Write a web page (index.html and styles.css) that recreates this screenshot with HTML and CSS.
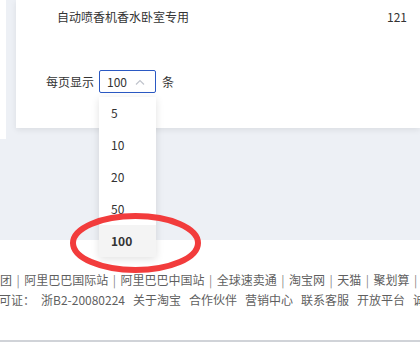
FILE: index.html
```html
<!DOCTYPE html>
<html lang="zh-CN">
<head>
<meta charset="utf-8">
<link rel="stylesheet" href="styles.css">
</head>
<body>
<div class="main">
  <div class="side"></div>
  <div class="card">
    <div class="row">
      <span class="name">自动喷香机香水卧室专用</span>
      <span class="num">121</span>
    </div>
    <div class="pager">
      <span class="label">每页显示</span>
      <div class="select">
        <span class="value">100</span>
        <svg class="chev" width="10" height="6" viewBox="0 0 10 6"><polyline points="1,5.5 5,1.5 9,5.5" fill="none" stroke="#c0c4cc" stroke-width="1.2"/></svg>
        <ul class="dropdown">
          <li>5</li>
          <li>10</li>
          <li>20</li>
          <li>50</li>
          <li class="active">100</li>
        </ul>
      </div>
      <span class="label unit">条</span>
    </div>
  </div>
</div>
<footer class="footer">
  <div class="line line1">
    <span>集团</span><span class="sep">|</span><span>阿里巴巴国际站</span><span class="sep">|</span><span>阿里巴巴中国站</span><span class="sep">|</span><span>全球速卖通</span><span class="sep">|</span><span>淘宝网</span><span class="sep">|</span><span>天猫</span><span class="sep">|</span><span>聚划算</span><span class="sep">|</span><span>一淘</span>
  </div>
  <div class="line line2">
    <span>许可证：</span><span class="lic">浙B2-20080224</span><span>关于淘宝</span><span>合作伙伴</span><span>营销中心</span><span>联系客服</span><span>开放平台</span><span>诚征英才</span>
  </div>
</footer>
<svg class="circle" width="140" height="70" viewBox="0 0 140 70"><ellipse cx="68.5" cy="34" rx="62.5" ry="27" fill="none" stroke="#f23c3c" stroke-width="6"/></svg>
</body>
</html>
```
FILE: styles.css
```css
* { box-sizing: border-box; }
html, body { margin: 0; padding: 0; }
body {
  width: 420px;
  height: 342px;
  overflow: hidden;
  position: relative;
  font-family: "Noto Sans CJK SC", "Noto Sans", sans-serif;
  font-size: 12px;
  color: #333;
  background: #fff;
}
.main {
  height: 240px;
  background: #edf0f5;
  display: flex;
  align-items: flex-start;
}
.side {
  width: 6px;
  height: 139px;
  background: #fff;
}
.card {
  margin-left: 10px;
  flex: 1;
  height: 128px;
  background: #fff;
  box-shadow: 0 2px 6px rgba(0, 0, 0, 0.08);
  padding-top: 7px;
  position: relative;
  z-index: 2;
}
.row {
  display: flex;
  justify-content: space-between;
  line-height: 20px;
  padding: 0 13px 0 41px;
}
.pager {
  margin-top: 43px;
  padding-left: 30px;
  display: flex;
  align-items: center;
  height: 23px;
}
.label { line-height: 23px; }
.unit { margin-left: 6px; }
.select {
  position: relative;
  margin-left: 5px;
  width: 57px;
  height: 23px;
  border: 1px solid #2b59c3;
  border-radius: 2px;
  display: flex;
  align-items: center;
  padding-left: 7px;
}
.value { line-height: 21px; }
.chev { margin-left: 8px; }
.dropdown {
  position: absolute;
  left: -1px;
  top: 26px;
  width: 57px;
  margin: 0;
  padding: 0;
  list-style: none;
  background: #fff;
  box-shadow: 0 2px 8px rgba(0, 0, 0, 0.12);
}
.dropdown li {
  height: 32px;
  line-height: 32px;
  padding-left: 12px;
  color: #333;
}
.dropdown li.active {
  background: #f4f4f4;
  font-weight: bold;
}
.footer {
  height: 102px;
  padding-top: 30px;
  border-bottom: 2px solid #d0d3d8;
  color: #5f5f5f;
  white-space: nowrap;
  overflow: hidden;
}
.line {
  display: flex;
  align-items: center;
  line-height: 20px;
  height: 20px;
}
.line1 { margin-left: -12px; }
.sep {
  color: #888;
  margin: 0 4.5px;
}
.line2 { margin-left: -13px; gap: 8px; }
.line2 .lic { margin-left: -2px; }
.circle {
  position: absolute;
  left: 67px;
  top: 209px;
  z-index: 5;
}
```
